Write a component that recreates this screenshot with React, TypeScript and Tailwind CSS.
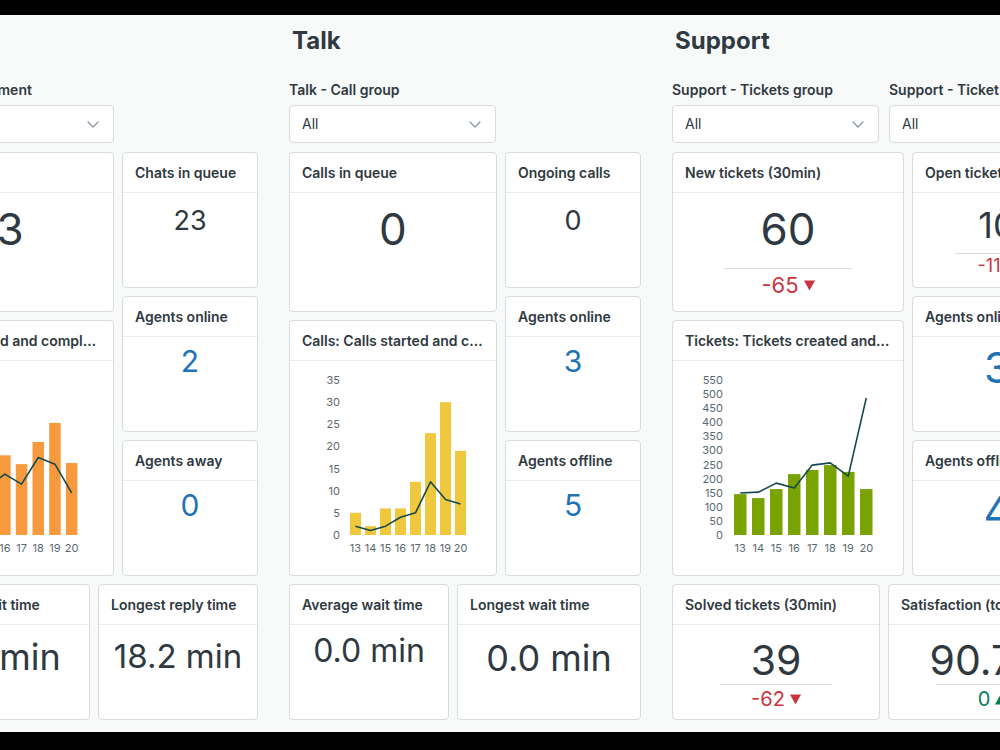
import React from 'react';

// Live dashboard: Chat, Talk and Support columns of metric cards

type Tone = 'dark' | 'blue';

const toneCls: Record<Tone, string> = {
  dark: 'text-[#2f3941]',
  blue: 'text-[#1f73b7]',
};

function Select({ className = '' }: { className?: string }) {
  return (
    <div
      className={`flex h-[38px] items-center justify-between rounded border border-[#d8dcde] bg-white pl-3 pr-[14px] text-sm text-[#2f3941] ${className}`}
    >
      <span>All</span>
      <svg width="12" height="7" viewBox="0 0 12 7" fill="none">
        <path d="M1 1l5 5 5-5" stroke="#87929d" strokeWidth="1.2" strokeLinecap="round" strokeLinejoin="round" />
      </svg>
    </div>
  );
}

function Filter({ label, className = '' }: { label: string; className?: string }) {
  return (
    <div className={`shrink-0 ${className}`}>
      <div className="mt-[30px] whitespace-nowrap text-sm leading-none font-semibold text-[#2f3941]">{label}</div>
      <Select className="mt-2" />
    </div>
  );
}

function Card({
  title,
  className = '',
  children,
}: {
  title: string;
  className?: string;
  children?: React.ReactNode;
}) {
  return (
    <div className={`flex shrink-0 flex-col overflow-hidden rounded border border-[#d8dcde] bg-white ${className}`}>
      <div className="flex h-10 shrink-0 items-center border-b border-[#e9ebed] px-3">
        <h3 className="truncate text-sm font-semibold text-[#2f3941]">{title}</h3>
      </div>
      <div className="min-h-0 flex-1">{children}</div>
    </div>
  );
}

function Value({ children, className = '', tone = 'dark' }: { children: React.ReactNode; className?: string; tone?: Tone }) {
  return <div className={`whitespace-nowrap text-center leading-none ${toneCls[tone]} ${className}`}>{children}</div>;
}

function Delta({ value, up = false, className = '' }: { value: string; up?: boolean; className?: string }) {
  return (
    <div
      className={`flex items-center justify-center gap-[5px] leading-none ${up ? 'text-[#038153]' : 'text-[#cc3340]'} ${className}`}
    >
      <span>{value}</span>
      <svg width="11" height="11" viewBox="0 0 11 11">
        {up ? <path d="M5.5 0.5L11 10.5H0z" fill="currentColor" /> : <path d="M0 0.5h11L5.5 10.5z" fill="currentColor" />}
      </svg>
    </div>
  );
}

interface ChartProps {
  bars: number[];
  line: number[];
  max: number;
  ticks: number[];
  color: string;
  x0: number;
  step: number;
  barW: number;
  axisX: number;
  width: number;
}

const hours = ['13', '14', '15', '16', '17', '18', '19', '20'];

function BarLineChart({ bars, line, max, ticks, color, x0, step, barW, axisX, width }: ChartProps) {
  const base = 174;
  const top = 19;
  const y = (v: number) => base - (v / max) * (base - top);
  const cx = (i: number) => x0 + i * step + barW / 2;

  return (
    <svg width={width} height={214} className="block">
      {ticks.map((t) => (
        <text key={t} x={axisX} y={y(t)} textAnchor="end" dominantBaseline="central" fontSize="11" fill="#5c6970">
          {t}
        </text>
      ))}
      {bars.map((v, i) => (
        <rect key={i} x={x0 + i * step} y={y(v)} width={barW} height={base - y(v)} fill={color} />
      ))}
      <polyline
        points={line.map((v, i) => `${cx(i)},${y(v)}`).join(' ')}
        fill="none"
        stroke="#17494d"
        strokeWidth="1.6"
        strokeLinejoin="round"
      />
      {hours.map((h, i) => (
        <text key={h} x={cx(i)} y={187} textAnchor="middle" dominantBaseline="central" fontSize="11" fill="#5c6970">
          {h}
        </text>
      ))}
    </svg>
  );
}

function ChatColumn() {
  return (
    <section className="w-[352px] shrink-0">
      <h2 className="pt-[14px] pl-[3px] text-2xl leading-none font-bold text-[#2f3941]">Chat</h2>
      <Filter label="Chat - Department" className="w-[208px]" />
      <div className="mt-[9px] flex gap-2">
        <div className="flex w-[208px] flex-col gap-2">
          <Card title="Chats" className="h-[160px]">
            <Value className="pt-[14px] text-[44px]">3</Value>
          </Card>
          <Card title="Chat: Started and completed" className="h-[256px]">
            <BarLineChart
              bars={[24, 30, 28, 36, 32, 42, 50.6, 32.5]}
              line={[20, 25, 22, 27.5, 23, 35, 32, 19]}
              max={70}
              ticks={[0, 10, 20, 30, 40, 50, 60, 70]}
              color="#f79a3e"
              x0={42}
              step={16.7}
              barW={11.5}
              axisX={32}
              width={206}
            />
          </Card>
        </div>
        <div className="flex w-[137px] flex-col gap-2">
          <Card title="Chats in queue" className="h-[136px]">
            <Value className="pt-[14px] text-[27px]">23</Value>
          </Card>
          <Card title="Agents online" className="h-[136px]">
            <Value tone="blue" className="pt-[9px] text-[30px]">2</Value>
          </Card>
          <Card title="Agents away" className="h-[136px]">
            <Value tone="blue" className="pt-[9px] text-[30px]">0</Value>
          </Card>
        </div>
      </div>
      <div className="mt-2 flex gap-2">
        <Card title="Average wait time" className="h-[136px] w-[184px]">
          <Value className="pt-[14px] text-[36px]">4.6 min</Value>
        </Card>
        <Card title="Longest reply time" className="h-[136px] w-[160px]">
          <Value className="pt-[15px] text-[33px]">18.2 min</Value>
        </Card>
      </div>
    </section>
  );
}

function TalkColumn() {
  return (
    <section className="w-[352px] shrink-0">
      <h2 className="pt-[14px] pl-[3px] text-2xl leading-none font-bold text-[#2f3941]">Talk</h2>
      <Filter label="Talk - Call group" className="w-[207px]" />
      <div className="mt-[9px] flex gap-2">
        <div className="flex w-[208px] flex-col gap-2">
          <Card title="Calls in queue" className="h-[160px]">
            <Value className="pt-[14px] text-[44px]">0</Value>
          </Card>
          <Card title="Calls: Calls started and completed" className="h-[256px]">
            <BarLineChart
              bars={[5, 2, 6, 6, 12, 23, 30, 19]}
              line={[2, 1, 2, 4, 5, 12, 8, 7]}
              max={35}
              ticks={[0, 5, 10, 15, 20, 25, 30, 35]}
              color="#efc83d"
              x0={60}
              step={15}
              barW={11}
              axisX={50}
              width={206}
            />
          </Card>
        </div>
        <div className="flex w-[137px] flex-col gap-2">
          <Card title="Ongoing calls" className="h-[136px]">
            <Value className="pt-[14px] text-[27px]">0</Value>
          </Card>
          <Card title="Agents online" className="h-[136px]">
            <Value tone="blue" className="pt-[9px] text-[30px]">3</Value>
          </Card>
          <Card title="Agents offline" className="h-[136px]">
            <Value tone="blue" className="pt-[9px] text-[30px]">5</Value>
          </Card>
        </div>
      </div>
      <div className="mt-2 flex gap-2">
        <Card title="Average wait time" className="h-[136px] w-[160px]">
          <Value className="pt-[10px] text-[32px]">0.0 min</Value>
        </Card>
        <Card title="Longest wait time" className="h-[136px] w-[184px]">
          <Value className="pt-[15px] text-[36px]">0.0 min</Value>
        </Card>
      </div>
    </section>
  );
}

function SupportColumn() {
  return (
    <section className="w-[424px] shrink-0">
      <h2 className="pt-[14px] pl-[3px] text-2xl leading-none font-bold text-[#2f3941]">Support</h2>
      <div className="flex gap-[10px]">
        <Filter label="Support - Tickets group" className="w-[207px]" />
        <Filter label="Support - Ticket form" className="w-[207px]" />
      </div>
      <div className="mt-[9px] flex gap-2">
        <div className="flex w-[232px] flex-col gap-2">
          <Card title="New tickets (30min)" className="h-[160px]">
            <Value className="pt-[14px] text-[44px]">60</Value>
            <div className="mx-auto mt-[17px] w-[128px] border-t border-[#d8dcde]" />
            <Delta value="-65" className="mt-[5px] text-[22px]" />
          </Card>
          <Card title="Tickets: Tickets created and solved" className="h-[256px]">
            <BarLineChart
              bars={[145, 131, 163, 216, 231, 248, 224, 163]}
              line={[149, 152, 184, 167, 248, 256, 209, 486]}
              max={550}
              ticks={[0, 50, 100, 150, 200, 250, 300, 350, 400, 450, 500, 550]}
              color="#78a300"
              x0={61}
              step={18}
              barW={12.5}
              axisX={50}
              width={230}
            />
          </Card>
        </div>
        <div className="flex w-[170px] flex-col gap-2">
          <Card title="Open tickets" className="h-[136px]">
            <Value className="pt-[14px] text-[36px]">10</Value>
            <div className="mx-auto mt-[10px] w-[84px] border-t border-[#d8dcde]" />
            <Delta value="-11" className="mt-[3px] text-[18px]" />
          </Card>
          <Card title="Agents online" className="h-[136px]">
            <Value tone="blue" className="pt-[10px] text-[42px]">3</Value>
          </Card>
          <Card title="Agents offline" className="h-[136px]">
            <Value tone="blue" className="pt-[10px] text-[42px]">4</Value>
          </Card>
        </div>
      </div>
      <div className="mt-2 flex gap-2">
        <Card title="Solved tickets (30min)" className="h-[136px] w-[208px]">
          <Value className="pt-[15px] text-[41px]">39</Value>
          <div className="mx-auto mt-[3px] w-[112px] border-t border-[#d8dcde]" />
          <Delta value="-62" className="mt-[4px] text-[20px]" />
        </Card>
        <Card title="Satisfaction (today)" className="h-[136px] w-[208px]">
          <Value className="pt-[15px] text-[41px]">90.7%</Value>
          <div className="mx-auto mt-[3px] w-[112px] border-t border-[#d8dcde]" />
          <Delta value="0" up className="mt-[4px] text-[20px]" />
        </Card>
      </div>
    </section>
  );
}

export default function App() {
  return (
    <div className="h-[750px] w-[1000px] overflow-hidden bg-black font-[Inter,sans-serif]">
      <div className="mt-[15px] h-[717px] overflow-hidden bg-[#f8f9f9]">
        <div className="ml-[-94px] flex gap-[31px]">
          <ChatColumn />
          <TalkColumn />
          <SupportColumn />
        </div>
      </div>
    </div>
  );
}
